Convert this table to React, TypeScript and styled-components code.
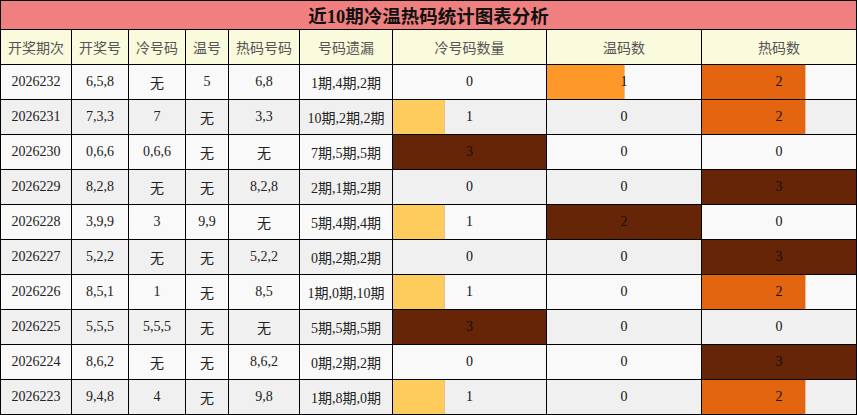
import React from "react";
import styled, { createGlobalStyle } from "styled-components";

const Global = createGlobalStyle`
  html, body { margin: 0; padding: 0; background: #ffffff; }
  body { font-family: "Liberation Serif", "Noto Sans CJK SC", serif; }
`;

const Table = styled.div`
  display: grid;
  grid-template-columns: 70px 56px 56px 42px 70px 92px 153px 154px 154px;
  grid-template-rows: 28px 34px;
  grid-auto-rows: 34px;
  gap: 1px;
  padding: 1px;
  background: #000;
  width: max-content;
`;

const Title = styled.div`
  grid-column: 1 / -1;
  background: #f08080;
  color: #111;
  font-weight: bold;
  font-size: 18.5px;
  display: flex;
  align-items: center;
  justify-content: center;
  font-family: "Liberation Serif", "Noto Sans CJK SC", serif;
`;

const HeadCell = styled.div`
  background: #fafadc;
  color: #555;
  font-size: 14px;
  font-family: "Noto Sans CJK SC", sans-serif;
  display: flex;
  align-items: center;
  justify-content: center;
  white-space: nowrap;
`;

const Cell = styled.div<{ $alt: boolean }>`
  background: ${(p) => (p.$alt ? "#f0f0f0" : "#f9f9f9")};
  color: #222;
  font-size: 14px;
  display: flex;
  align-items: center;
  justify-content: center;
  white-space: nowrap;
`;

const BarCell = styled(Cell)<{ $pct: number; $color: string }>`
  background: ${(p) =>
    p.$pct > 0
      ? `linear-gradient(to right, ${p.$color} 0, ${p.$color} ${p.$pct}%, rgba(255,210,170,0.9) ${p.$pct}%, rgba(255,210,170,0.9) calc(${p.$pct}% + 1px), ${p.$alt ? "#f0f0f0" : "#f9f9f9"} calc(${p.$pct}% + 1px))`
      : p.$alt
      ? "#f0f0f0"
      : "#f9f9f9"};
  color: #111;
`;

type Row = {
  issue: string;
  nums: string;
  cold: string;
  warm: string;
  hot: string;
  miss: string;
  c: number;
  w: number;
  h: number;
};

const rows: Row[] = [
  { issue: "2026232", nums: "6,5,8", cold: "无", warm: "5", hot: "6,8", miss: "1期,4期,2期", c: 0, w: 1, h: 2 },
  { issue: "2026231", nums: "7,3,3", cold: "7", warm: "无", hot: "3,3", miss: "10期,2期,2期", c: 1, w: 0, h: 2 },
  { issue: "2026230", nums: "0,6,6", cold: "0,6,6", warm: "无", hot: "无", miss: "7期,5期,5期", c: 3, w: 0, h: 0 },
  { issue: "2026229", nums: "8,2,8", cold: "无", warm: "无", hot: "8,2,8", miss: "2期,1期,2期", c: 0, w: 0, h: 3 },
  { issue: "2026228", nums: "3,9,9", cold: "3", warm: "9,9", hot: "无", miss: "5期,4期,4期", c: 1, w: 2, h: 0 },
  { issue: "2026227", nums: "5,2,2", cold: "无", warm: "无", hot: "5,2,2", miss: "0期,2期,2期", c: 0, w: 0, h: 3 },
  { issue: "2026226", nums: "8,5,1", cold: "1", warm: "无", hot: "8,5", miss: "1期,0期,10期", c: 1, w: 0, h: 2 },
  { issue: "2026225", nums: "5,5,5", cold: "5,5,5", warm: "无", hot: "无", miss: "5期,5期,5期", c: 3, w: 0, h: 0 },
  { issue: "2026224", nums: "8,6,2", cold: "无", warm: "无", hot: "8,6,2", miss: "0期,2期,2期", c: 0, w: 0, h: 3 },
  { issue: "2026223", nums: "9,4,8", cold: "4", warm: "无", hot: "9,8", miss: "1期,8期,0期", c: 1, w: 0, h: 2 },
];

const headers = ["开奖期次", "开奖号", "冷号码", "温号", "热码号码", "号码遗漏", "冷号码数量", "温码数", "热码数"];

const colorFor = (ratio: number) => {
  if (ratio >= 0.99) return "#662506";
  if (ratio >= 0.6) return "#e3650f";
  if (ratio >= 0.45) return "#fe9929";
  return "#fecc5c";
};

const maxC = Math.max(...rows.map((r) => r.c));
const maxW = Math.max(...rows.map((r) => r.w));
const maxH = Math.max(...rows.map((r) => r.h));

const Bar: React.FC<{ v: number; max: number; alt: boolean }> = ({ v, max, alt }) => {
  const ratio = max ? v / max : 0;
  return (
    <BarCell $alt={alt} $pct={Math.round(ratio * 1000) / 10} $color={colorFor(ratio)}>
      {v}
    </BarCell>
  );
};

export default function App() {
  return (
    <>
      <Global />
      <Table>
        <Title>近10期冷温热码统计图表分析</Title>
        {headers.map((h) => (
          <HeadCell key={h}>{h}</HeadCell>
        ))}
        {rows.map((r, i) => {
          const alt = i % 2 === 1;
          return (
            <React.Fragment key={r.issue}>
              <Cell $alt={alt}>{r.issue}</Cell>
              <Cell $alt={alt}>{r.nums}</Cell>
              <Cell $alt={alt}>{r.cold}</Cell>
              <Cell $alt={alt}>{r.warm}</Cell>
              <Cell $alt={alt}>{r.hot}</Cell>
              <Cell $alt={alt}>{r.miss}</Cell>
              <Bar v={r.c} max={maxC} alt={alt} />
              <Bar v={r.w} max={maxW} alt={alt} />
              <Bar v={r.h} max={maxH} alt={alt} />
            </React.Fragment>
          );
        })}
      </Table>
    </>
  );
}
